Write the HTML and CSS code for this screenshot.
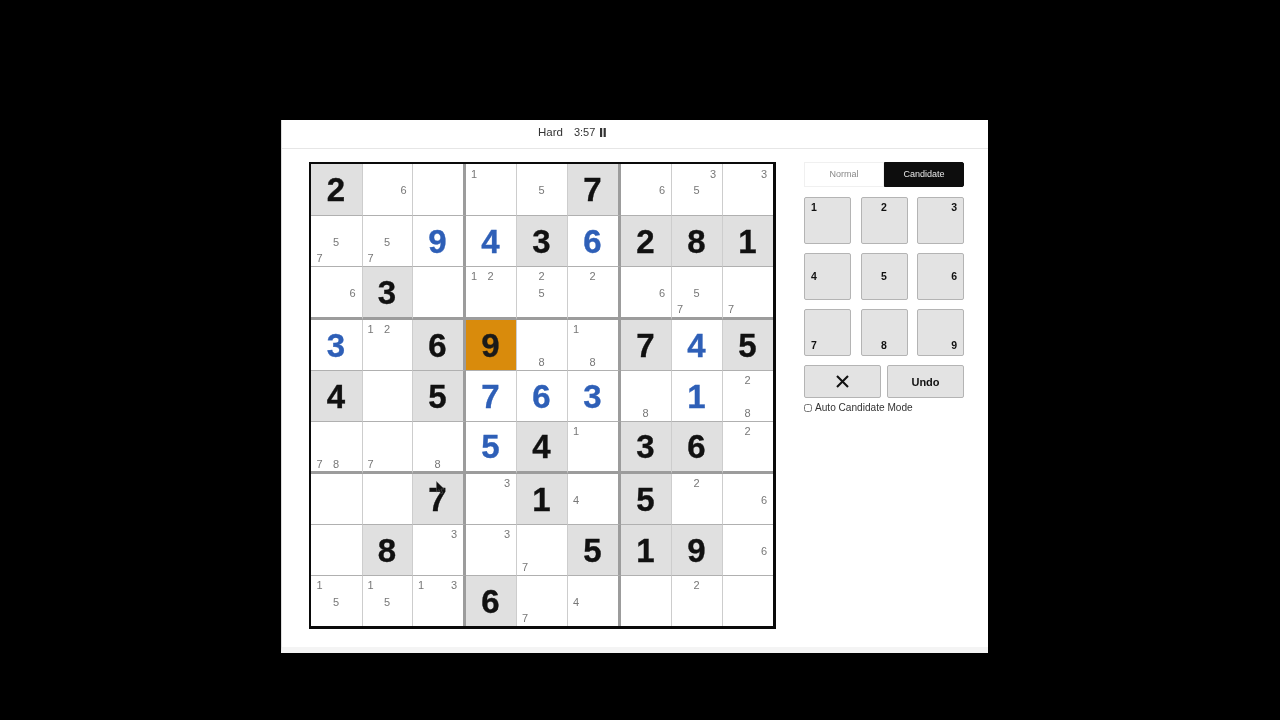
FILE: index.html
```html
<!DOCTYPE html>
<html lang="en">
<head>
<meta charset="utf-8">
<title>Sudoku</title>
<link rel="stylesheet" href="styles.css">
</head>
<body>
<div class="window">
  <header class="topbar">
    <span class="level">Hard</span>
    <span class="clock">3:57</span>
    <svg class="pause" width="6" height="9" viewBox="0 0 6 9"><rect x="0" y="0" width="2.2" height="9"/><rect x="3.6" y="0" width="2.2" height="9"/></svg>
  </header>
  <main class="game">
    <div class="board">
      <div class="cell given">2</div><div class="cell"><div class="notes"><span class="n6">6</span></div></div><div class="cell box-r"></div><div class="cell"><div class="notes"><span class="n1">1</span></div></div><div class="cell"><div class="notes"><span class="n5">5</span></div></div><div class="cell given box-r">7</div><div class="cell"><div class="notes"><span class="n6">6</span></div></div><div class="cell"><div class="notes"><span class="n3">3</span><span class="n5">5</span></div></div><div class="cell"><div class="notes"><span class="n3">3</span></div></div>

      <div class="cell"><div class="notes"><span class="n5">5</span><span class="n7">7</span></div></div><div class="cell"><div class="notes"><span class="n5">5</span><span class="n7">7</span></div></div><div class="cell solved box-r">9</div><div class="cell solved">4</div><div class="cell given">3</div><div class="cell solved box-r">6</div><div class="cell given">2</div><div class="cell given">8</div><div class="cell given">1</div>

      <div class="cell box-b"><div class="notes"><span class="n6">6</span></div></div><div class="cell given box-b">3</div><div class="cell box-r box-b"></div><div class="cell box-b"><div class="notes"><span class="n1">1</span><span class="n2">2</span></div></div><div class="cell box-b"><div class="notes"><span class="n2">2</span><span class="n5">5</span></div></div><div class="cell box-r box-b"><div class="notes"><span class="n2">2</span></div></div><div class="cell box-b"><div class="notes"><span class="n6">6</span></div></div><div class="cell box-b"><div class="notes"><span class="n5">5</span><span class="n7">7</span></div></div><div class="cell box-b"><div class="notes"><span class="n7">7</span></div></div>

      <div class="cell solved">3</div><div class="cell"><div class="notes"><span class="n1">1</span><span class="n2">2</span></div></div><div class="cell given box-r">6</div><div class="cell selected">9</div><div class="cell"><div class="notes"><span class="n8">8</span></div></div><div class="cell box-r"><div class="notes"><span class="n1">1</span><span class="n8">8</span></div></div><div class="cell given">7</div><div class="cell solved">4</div><div class="cell given">5</div>

      <div class="cell given">4</div><div class="cell"></div><div class="cell given box-r">5</div><div class="cell solved">7</div><div class="cell solved">6</div><div class="cell solved box-r">3</div><div class="cell"><div class="notes"><span class="n8">8</span></div></div><div class="cell solved">1</div><div class="cell"><div class="notes"><span class="n2">2</span><span class="n8">8</span></div></div>

      <div class="cell box-b"><div class="notes"><span class="n7">7</span><span class="n8">8</span></div></div><div class="cell box-b"><div class="notes"><span class="n7">7</span></div></div><div class="cell box-r box-b"><div class="notes"><span class="n8">8</span></div></div><div class="cell solved box-b">5</div><div class="cell given box-b">4</div><div class="cell box-r box-b"><div class="notes"><span class="n1">1</span></div></div><div class="cell given box-b">3</div><div class="cell given box-b">6</div><div class="cell box-b"><div class="notes"><span class="n2">2</span></div></div>

      <div class="cell"></div><div class="cell"></div><div class="cell given box-r">7</div><div class="cell"><div class="notes"><span class="n3">3</span></div></div><div class="cell given">1</div><div class="cell box-r"><div class="notes"><span class="n4">4</span></div></div><div class="cell given">5</div><div class="cell"><div class="notes"><span class="n2">2</span></div></div><div class="cell"><div class="notes"><span class="n6">6</span></div></div>

      <div class="cell"></div><div class="cell given">8</div><div class="cell box-r"><div class="notes"><span class="n3">3</span></div></div><div class="cell"><div class="notes"><span class="n3">3</span></div></div><div class="cell"><div class="notes"><span class="n7">7</span></div></div><div class="cell given box-r">5</div><div class="cell given">1</div><div class="cell given">9</div><div class="cell"><div class="notes"><span class="n6">6</span></div></div>

      <div class="cell"><div class="notes"><span class="n1">1</span><span class="n5">5</span></div></div><div class="cell"><div class="notes"><span class="n1">1</span><span class="n5">5</span></div></div><div class="cell box-r"><div class="notes"><span class="n1">1</span><span class="n3">3</span></div></div><div class="cell given">6</div><div class="cell"><div class="notes"><span class="n7">7</span></div></div><div class="cell box-r"><div class="notes"><span class="n4">4</span></div></div><div class="cell"></div><div class="cell"><div class="notes"><span class="n2">2</span></div></div><div class="cell"></div>

      <svg class="pointer" width="9" height="14" viewBox="0 0 9 14"><path d="M0.5 0.5V11L3 8.6L5 13L6.8 12.2L4.9 8H8.2Z" fill="#111" stroke="#666" stroke-width="0.5"/></svg>
    </div>
    <aside class="controls">
      <div class="mode">
        <button class="mode-btn">Normal</button>
        <button class="mode-btn active">Candidate</button>
      </div>
      <div class="keypad">
        <button class="key k1">1</button>
        <button class="key k2">2</button>
        <button class="key k3">3</button>
        <button class="key k4">4</button>
        <button class="key k5">5</button>
        <button class="key k6">6</button>
        <button class="key k7">7</button>
        <button class="key k8">8</button>
        <button class="key k9">9</button>
      </div>
      <div class="actions">
        <button class="action" aria-label="Erase"><svg width="13" height="13" viewBox="0 0 13 13"><path d="M1 1L12 12M12 1L1 12" stroke="#111" stroke-width="2.1" fill="none"/></svg></button>
        <button class="action">Undo</button>
      </div>
      <label class="auto"><input type="checkbox" class="auto-box"><span>Auto Candidate Mode</span></label>
    </aside>
  </main>
</div>
</body>
</html>
```

FILE: styles.css
```css
* { box-sizing: border-box; }

html, body { margin: 0; height: 100%; }

body {
  background: #000;
  padding: 120px 0 0 281px;
  font-family: "Liberation Sans", Arial, sans-serif;
}

.window {
  width: 707px;
  height: 533px;
  background: #fff;
  border-left: 1px solid #ddd;
  border-bottom: 6px solid #f4f4f4;
}

.topbar {
  height: 29px;
  border-bottom: 1px solid #e6e6e6;
  display: flex;
  align-items: center;
  padding: 0 0 4px 256px;
  font-size: 11.5px;
  color: #333;
  will-change: transform;
}

.level { margin-right: 11px; }

.clock { margin-right: 5px; font-size: 11px; }

.pause { fill: #333; }

.game {
  display: flex;
  align-items: flex-start;
  padding: 13px 0 0 27px;
}

.board {
  position: relative;
  display: grid;
  grid-template-columns: 52px 50px 53px 51px 51px 53px 51px 51px 50px;
  grid-template-rows: 52px 51px 53px 51px 51px 52px 51px 51px 50px;
  border-style: solid;
  border-color: #0a0a0a;
  border-width: 2px 3px 3px 2px;
  flex: none;
  will-change: transform;
}

.cell {
  display: flex;
  align-items: center;
  justify-content: center;
  padding-right: 1px;
  border-right: 1px solid #cdcdcd;
  border-bottom: 1px solid #b0b0b0;
  font-size: 33px;
  font-weight: 700;
  -webkit-text-stroke: 0.35px currentColor;
  color: #111;
  line-height: 1;
}

.cell:nth-child(9n) { border-right: 0; }
.cell:nth-child(n+73) { border-bottom: 0; }

.box-r { border-right: 3px solid #9c9c9c; }
.box-b { border-bottom: 3px solid #9c9c9c; }

.given { background: #e0e0e0; }
.solved { color: #2e5fb7; }
.selected { background: #d98b0c; color: #1a1a1a; }

.notes {
  display: grid;
  grid-template-columns: repeat(3, 16.5px);
  grid-template-rows: repeat(3, 16.5px);
  padding-top: 2px;
  font-size: 11px;
  font-weight: 400;
  -webkit-text-stroke: 0;
  color: #777;
  text-align: center;
  line-height: 16.5px;
}

.n1 { grid-area: 1 / 1; }
.n2 { grid-area: 1 / 2; }
.n3 { grid-area: 1 / 3; }
.n4 { grid-area: 2 / 1; }
.n5 { grid-area: 2 / 2; }
.n6 { grid-area: 2 / 3; }
.n7 { grid-area: 3 / 1; }
.n8 { grid-area: 3 / 2; }
.n9 { grid-area: 3 / 3; }

.pointer {
  position: absolute;
  left: 125px;
  top: 317px;
}

.controls {
  width: 160px;
  margin-left: 28px;
  flex: none;
  will-change: transform;
}

.mode {
  display: flex;
  height: 25px;
  margin-bottom: 10px;
}

.mode-btn {
  flex: 1;
  border: 1px solid #f0f0f0;
  background: #fff;
  color: #888;
  font: 400 9px "Liberation Sans", Arial, sans-serif;
  padding: 0 0 1px;
}

.mode-btn.active {
  background: #0d0d0d;
  border-color: #0d0d0d;
  border-radius: 0 2px 2px 0;
  color: #e8e8e8;
}

.keypad {
  display: grid;
  grid-template-columns: repeat(3, 47px);
  grid-auto-rows: 47px;
  gap: 9px 9.5px;
}

.key {
  display: flex;
  padding: 3px 6px 4px 6px;
  border: 1px solid #b4b4b4;
  border-radius: 2px;
  background: #e3e3e3;
  color: #111;
  font: 700 10.5px/12px "Liberation Sans", Arial, sans-serif;
}

.k1, .k4, .k7 { justify-content: flex-start; }
.k2, .k5, .k8 { justify-content: center; }
.k3, .k6, .k9 { justify-content: flex-end; }
.k1, .k2, .k3 { align-items: flex-start; }
.k4, .k5, .k6 { align-items: center; }
.k7, .k8, .k9 { align-items: flex-end; }

.actions {
  display: flex;
  gap: 6px;
  margin-top: 9px;
}

.action {
  flex: 1;
  height: 33px;
  display: flex;
  align-items: center;
  justify-content: center;
  padding: 0;
  border: 1px solid #b4b4b4;
  border-radius: 2px;
  background: #e3e3e3;
  color: #111;
  font: 700 11px "Liberation Sans", Arial, sans-serif;
}

.auto {
  display: flex;
  align-items: center;
  gap: 3px;
  margin-top: 4px;
  font-size: 10.1px;
  color: #333;
}

.auto-box {
  width: 8px;
  height: 8px;
  margin: 0;
  flex: none;
}
```
